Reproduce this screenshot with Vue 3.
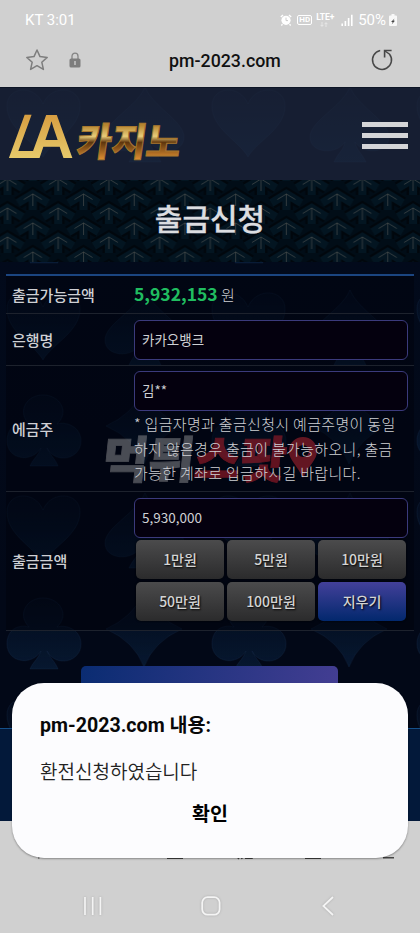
<template>
    <div class="phone">
        <!-- Status bar -->
        <div class="status">
            <span class="carrier">KT 3:01</span>
            <div class="indicators">
                <svg width="12" height="12" viewBox="0 0 12 12">
                    <circle cx="6" cy="6.3" r="4.6" fill="#fff" />
                    <path d="M.8 3 3 1M11.2 3 9 1M2.5 10.2 1.3 11.4M9.5 10.2l1.2 1.2" stroke="#fff" stroke-width="1.4" />
                    <path d="M6 3.6v3h2" fill="none" stroke="#ccc" stroke-width="1" />
                </svg>
                <span class="hd">HD</span>
                <div class="lte">
                    <span>LTE+</span>
                    <svg width="8" height="5" viewBox="0 0 8 5">
                        <path d="M2 0v4M.5 2.8 2 4.4l1.5-1.6M6 5V1M4.5 2.2 6 .6l1.5 1.6" fill="none" stroke="#f0f0f0" stroke-width=".7" />
                    </svg>
                </div>
                <svg class="signal" width="12" height="12" viewBox="0 0 12 12">
                    <path d="M1.2 12V9.4M4.4 12V7M7.6 12V4M10.8 12V.8" stroke="#fff" stroke-width="1.6" />
                </svg>
                <span class="percent">50%</span>
                <svg class="battery" width="8" height="12" viewBox="0 0 8 12">
                    <path d="M2.5 1.4V0h3v1.4H7q1 0 1 1V11q0 1-1 1H1q-1 0-1-1V2.4q0-1 1-1z" fill="#f8f8f8" />
                    <path d="M5.5 4.5 2 8h1.7L2.8 10.3 6 6.8H4.4z" fill="#444" />
                </svg>
            </div>
        </div>

        <!-- Address bar -->
        <div class="address">
            <svg class="star" width="24" height="24" viewBox="0 0 24 24">
                <path d="m12 2 3 6.6 7.2.8-5.4 4.8 1.6 7.2-6.4-3.7-6.4 3.7 1.6-7.2L1.8 9.4 9 8.6z" fill="none" stroke="#7d7d7d" stroke-width="1.5" stroke-linejoin="round" />
            </svg>
            <svg class="lock" width="12" height="16" viewBox="0 0 12 16">
                <path d="M3 7V4.2a3 3 0 0 1 6 0V7" fill="none" stroke="#848484" stroke-width="1.3" />
                <rect x=".5" y="6.5" width="11" height="9" rx="1.6" fill="#7d7d7d" />
                <path d="M6 9v4" stroke="#ccc" stroke-width="1.4" />
            </svg>
            <span class="host">pm-2023.com</span>
            <svg class="reload" width="24" height="24" viewBox="0 0 24 24">
                <path d="M10.2 2.6A9.5 9.5 0 1 0 19.6 6.2L15 3" fill="none" stroke="#484848" stroke-width="1.5" />
                <path d="M14.6 9.5V2.5h7" fill="none" stroke="#484848" stroke-width="1.6" />
            </svg>
        </div>

        <div class="site">
            <svg class="suits" width="420" height="641">
                <defs>
                    <linearGradient id="suit" x1="0" y1="0" x2="0" y2="1">
                        <stop offset="0" stop-color="#0b2443" stop-opacity=".12" />
                        <stop offset="1" stop-color="#0b2748" stop-opacity=".5" />
                    </linearGradient>
                    <pattern id="cards" width="205" height="203" patternUnits="userSpaceOnUse">
                        <g fill="url(#suit)" stroke="#163358" stroke-opacity=".22">
                            <path d="M43 70C34 54 7 42 7 19 7-1 35-3 43 17 51-3 80-1 80 19 80 42 52 54 43 70z" />
                            <path d="M145 0c8 20 39 34 39 50 0 17-26 18-34 5 2 9 7 11 11 20h-32c4-9 9-11 11-20-8 13-35 12-35-5 0-16 32-30 40-50z" />
                            <path d="M47 158c4 8 9 12 11 18H30c3-7 8-10 11-18-10 16-34 11-34-7 0-15 12-20 22-17-12-12-3-29 14-29s27 17 14 29c11-3 24 4 24 17 0 18-25 24-34 7z" />
                            <path d="M144 100q11 24 38 36-28 12-38 38-10-26-38-38 27-12 38-36z" />
                        </g>
                    </pattern>
                </defs>
                <rect width="420" height="641" fill="url(#cards)" />
            </svg>

            <header class="top">
                <svg class="logo" width="190" height="84" viewBox="0 -14 190 84">
                    <defs>
                        <linearGradient id="gold" x1="0" y1="0" x2="0" y2="1">
                            <stop offset=".15" stop-color="#d69a3e" />
                            <stop offset=".8" stop-color="#e6c96a" />
                        </linearGradient>
                        <linearGradient id="bronze" x1="0" y1="0" x2="0" y2="1">
                            <stop offset=".25" stop-color="#b5842f" />
                            <stop offset=".45" stop-color="#e8cd7a" />
                            <stop offset=".56" stop-color="#5e350d" />
                            <stop offset=".85" stop-color="#d88a30" />
                        </linearGradient>
                    </defs>
                    <text class="mark" x="0" y="50" transform="translate(16 0) skewX(-20)" textLength="29" lengthAdjust="spacingAndGlyphs">L</text>
                    <text class="mark" x="21" y="50" textLength="45" lengthAdjust="spacingAndGlyphs">A</text>
                    <text class="word" x="68" y="48" transform="translate(6 0) skewX(-8)" textLength="104" lengthAdjust="spacingAndGlyphs">카지노</text>
                </svg>
                <div class="burger"><i></i><i></i><i></i></div>
            </header>

            <div class="banner">
                <svg class="weave" width="420" height="82">
                    <defs>
                        <g id="bars" fill="none">
                            <path d="M-15 9 0 0 15 9M0 0V16" stroke="#01070d" stroke-width="13" />
                            <path d="M-15 9 0 0 15 9M0 0V16" stroke="#031521" stroke-width="8" />
                        </g>
                        <path id="ridge" d="M-9 5.5 0 0 9 5.5M0 0V12" fill="none" stroke="#585a55" stroke-width=".8" stroke-opacity=".7" />
                        <pattern id="mesh" width="50.7" height="29" patternUnits="userSpaceOnUse" x="7.5" y="-1">
                            <rect width="51" height="29" fill="#010d17" />
                            <use
                                v-for="(k, i) in knots"
                                :key="'b' + i"
                                href="#bars"
                                :x="k[0]"
                                :y="k[1]"
                            />
                            <use
                                v-for="(k, i) in knots"
                                :key="'r' + i"
                                href="#ridge"
                                :x="k[0]"
                                :y="k[1]"
                            />
                        </pattern>
                    </defs>
                    <rect width="420" height="82" fill="url(#mesh)" />
                </svg>
                <h1>출금신청</h1>
            </div>

            <div class="form">
                <div class="row balance">
                    <label>출금가능금액</label>
                    <div class="cell"><b>5,932,153</b> <span>원</span></div>
                </div>
                <div class="row">
                    <label>은행명</label>
                    <div class="cell"><div class="field">카카오뱅크</div></div>
                </div>
                <div class="row holder">
                    <label>에금주</label>
                    <div class="cell">
                        <div class="field">김**</div>
                        <p>* 입금자명과 출금신청시 예금주명이 동일<br />하지 않은경우 출금이 불가능하오니, 출금<br />가능한 계좌로 입금하시길 바랍니다.</p>
                    </div>
                    <div class="watermark">
                        <span>먹튀</span><span class="red">스팟</span>
                        <svg width="28" height="43" viewBox="0 0 28 43">
                            <path fill-rule="evenodd" d="M14 0a14 14 0 0 1 14 14c0 9-8 14-14 27C8 28 0 23 0 14A14 14 0 0 1 14 0zm0 8a6 6 0 1 0 0 12 6 6 0 0 0 0-12z" fill="#b32430" />
                        </svg>
                    </div>
                </div>
                <div class="row amount">
                    <label>출금금액</label>
                    <div class="cell">
                        <div class="field">5,930,000</div>
                        <div class="chips">
                            <button
                                v-for="chip in chips"
                                :key="chip"
                                :class="{ clear: chip === '지우기' }"
                            >{{ chip }}</button>
                        </div>
                    </div>
                </div>
            </div>

            <div class="submit"></div>
            <div class="footer"></div>
        </div>

        <!-- Browser toolbar, mostly under the dialog -->
        <div class="toolbar">
            <svg width="420" height="20" viewBox="0 0 420 20" fill="none" stroke="#444" stroke-width="1.5">
                <path d="m44 1-7 8 2 8.5M96 1l6 8-1 8M167 17.2h16M168 4v13M182 4v13M238 18l3-5 1 5M245 17.2h7V6M305 17.2h16M306 4v13M320 4v13M383 16.8h11M383 11h11" />
            </svg>
        </div>

        <div class="navbar">
            <svg width="20" height="20" viewBox="0 0 20 20">
                <path d="M2 1v18M9.7 1v18M17.4 1v18" stroke="#f4f4f4" stroke-width="1.7" />
            </svg>
            <svg width="20" height="20" viewBox="0 0 20 20">
                <rect x="1.2" y="1.2" width="17.4" height="17.4" rx="5.4" fill="none" stroke="#f4f4f4" stroke-width="1.8" />
            </svg>
            <svg width="20" height="20" viewBox="0 0 20 20">
                <path d="M15 1 5.4 10l9.6 9" fill="none" stroke="#f4f4f4" stroke-width="1.8" />
            </svg>
        </div>

        <div v-if="show" class="dialog">
            <h2>pm-2023.com 내용:</h2>
            <p>환전신청하였습니다</p>
            <button @click="show = false">확인</button>
        </div>
    </div>
</template>

<script setup>
import { ref } from "vue";

const show = ref(true);
const chips = ["1만원", "5만원", "10만원", "50만원", "100만원", "지우기"];

// Knots of one weave tile, neighbours included so the bars join at its edges
const knots = [-29, 0, 29].flatMap((y) => [
    [0, y],
    [50.7, y],
    [25.35, y + 15],
]);
</script>

<style>
body {
    margin: 0;
    background: #d0d0d0;
}
</style>

<style scoped>
.phone {
    position: relative;
    width: 420px;
    height: 933px;
    overflow: hidden;
    background: #d0d0d0;
    font-family: "Noto Sans CJK KR", sans-serif;
}
.phone svg {
    display: block;
    flex: none;
}
h1,
h2,
p {
    margin: 0;
}
button {
    border: 0;
    padding: 0;
    font-family: inherit;
}

/* ==================== BROWSER ==================== */
.status {
    display: flex;
    align-items: center;
    justify-content: space-between;
    height: 39px;
    padding: 0 23px 0 25px;
    color: #fff;
    font-family: Roboto, sans-serif;
}
.carrier {
    font-size: 15px;
}
.indicators {
    display: flex;
    align-items: center;
}
.hd {
    margin-left: 5px;
    border: 1px solid #fff;
    border-radius: 2px;
    padding: 0 1px;
    font-size: 8px;
    line-height: 8px;
    font-weight: 700;
}
.lte {
    display: flex;
    flex-direction: column;
    align-items: flex-start;
    width: 20px;
    margin-left: 4px;
    font-size: 8.5px;
    line-height: 9px;
    font-weight: 700;
}
.lte svg {
    margin-left: 4px;
}
.signal {
    margin-left: 5px;
}
.percent {
    margin-left: 5px;
    font-size: 15px;
}
.battery {
    margin-left: 3px;
}
.address {
    display: flex;
    align-items: center;
    height: 48px;
    box-sizing: border-box;
    padding: 0 26px 8px 25px;
}
.address svg {
    position: relative;
    top: 1px;
}
.lock {
    margin-left: 20px;
}
.host {
    flex: 1;
    margin: 2px 0 0 88px;
    font: 500 17.8px Roboto, sans-serif;
    color: #111;
}

/* ==================== SITE ==================== */
.site {
    position: relative;
    height: 734px;
    overflow: hidden;
    background: linear-gradient(#020b1d, #020817 70%, #020817);
    color: #cfd0d4;
}
.suits {
    position: absolute;
    top: 0;
    left: 0;
}
.top {
    position: relative;
    display: flex;
    align-items: flex-start;
    justify-content: space-between;
    height: 93px;
    box-sizing: border-box;
    padding: 6px 12px 0 8px;
    border-top: 1px solid #0c1425;
    background: rgba(33, 40, 60, 0.68);
}
.mark {
    font: 700 63px "Liberation Sans", sans-serif;
    fill: url(#gold);
}
.word {
    font: 900 39px "Noto Sans CJK KR", sans-serif;
    fill: url(#bronze);
    stroke: #a8782e;
    stroke-width: 1;
}
.burger {
    display: grid;
    gap: 6px;
    width: 46px;
    margin-top: 28px;
}
.burger i {
    height: 5px;
    background: #d4d5d8;
}
.banner {
    position: relative;
    height: 82px;
    text-align: center;
}
.weave {
    position: absolute;
    inset: 0;
}
h1 {
    position: relative;
    padding-top: 15px;
    font-size: 30px;
    line-height: 44px;
    font-weight: 500;
    color: #dcdde0;
    -webkit-text-stroke: 0.3px #dcdde0;
}
.form {
    position: relative;
    margin: 12px 6px 0;
    border-top: 2px solid #1b4580;
    background: rgba(0, 2, 12, 0.45);
}
.row {
    position: relative;
    display: flex;
    align-items: center;
    height: 52px;
    box-sizing: border-box;
    border-bottom: 1px solid #1d222d;
}
.balance {
    height: 38px;
}
.holder {
    height: 126px;
}
.amount {
    height: 139px;
}
label {
    width: 122px;
    padding-left: 6px;
    margin-top: -1px;
    font-size: 15px;
    font-weight: 500;
}
.cell {
    width: 274px;
    font-weight: 300;
    font-size: 15px;
}
.balance .cell {
    margin-top: -2px;
}
.cell b {
    font-size: 17.5px;
    font-weight: 700;
    color: #20bd60;
}
.field {
    height: 40px;
    box-sizing: border-box;
    padding-left: 7px;
    border: 1.5px solid #3b3a7c;
    border-radius: 6px;
    background: #04000e;
    font-size: 13.5px;
    line-height: 36px;
    font-weight: 400;
}
.cell p {
    margin-top: 1px;
    font-size: 15px;
    line-height: 24.5px;
    letter-spacing: 0.32px;
    white-space: nowrap;
}
.watermark {
    position: absolute;
    left: 97px;
    top: 67px;
    display: flex;
    align-items: flex-start;
    opacity: 0.55;
    font-weight: 900;
    font-size: 50px;
    line-height: 46px;
    color: #85868a;
}
.watermark span {
    transform: skewX(-6deg);
    -webkit-text-stroke: 0.8px currentColor;
}
.watermark .red {
    color: #b01e2a;
}
.watermark svg {
    margin: 4px 0 0 2px;
}
.holder .cell {
    position: relative;
    z-index: 1;
}
.amount .cell {
    margin-top: -4px;
}
.chips {
    display: grid;
    grid-template-columns: repeat(3, 88px);
    gap: 3px;
    margin: 2px 2px 0;
}
.chips button {
    height: 39px;
    border-radius: 5px;
    background: linear-gradient(#4b4b4c, #2b2b2c);
    box-shadow: 0 0 2px #000;
    color: #d4d4d4;
    font-size: 14px;
    line-height: 39px;
    font-weight: 500;
    text-shadow: 1px 1px 2px #000;
}
.chips .clear {
    background: linear-gradient(#43409a, #02286d);
}
.submit {
    position: relative;
    width: 257px;
    height: 50px;
    margin: 35px 0 0 81px;
    border-radius: 5px;
    background: linear-gradient(100deg, #0a2c72, #443e93);
}
.footer {
    position: relative;
    height: 93px;
    margin-top: 12px;
    border-top: 1px solid #15508a;
    background: #03193a;
}

/* ==================== SYSTEM BARS ==================== */
.toolbar {
    display: flex;
    align-items: flex-start;
    height: 62px;
    box-sizing: border-box;
    padding-top: 20px;
}
.navbar {
    display: flex;
    justify-content: space-between;
    padding: 13px 82px 0 83px;
}
.navbar svg {
    filter: drop-shadow(0 0 1px #aaa);
}

/* ==================== DIALOG ==================== */
.dialog {
    position: absolute;
    left: 12px;
    top: 683px;
    display: flex;
    flex-direction: column;
    align-items: flex-start;
    width: 396px;
    height: 175px;
    box-sizing: border-box;
    padding: 28px 28px 0;
    border-radius: 32px;
    background: #fcfcfe;
    box-shadow: 0 1px 2px rgba(0, 0, 0, 0.35);
    color: #080808;
}
.dialog h2 {
    font: 700 19.6px/30px Roboto, "Noto Sans CJK KR", sans-serif;
}
.dialog p {
    margin-top: 15px;
    font-size: 19px;
    line-height: 30px;
    font-weight: 350;
    color: #222;
}
.dialog button {
    align-self: center;
    margin-top: 12px;
    background: none;
    font-size: 19.5px;
    line-height: 30px;
    font-weight: 700;
}
</style>
